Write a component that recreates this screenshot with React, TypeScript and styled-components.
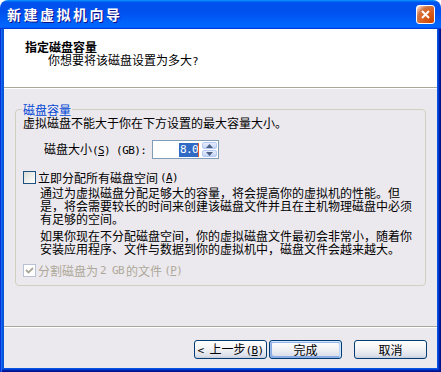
import * as React from "react";
import styled, { createGlobalStyle } from "styled-components";

const uiFont = `"Noto Sans CJK SC", "Noto Sans", "Liberation Sans", sans-serif`;
const monoFont = `"DejaVu Sans Mono", "Liberation Mono", monospace`;
const faceColor = "#ece9ee";

const GlobalStyle = createGlobalStyle`
  html, body {
    margin: 0;
    padding: 0;
    background: #fff;
  }
  body {
    font-family: ${uiFont};
    font-size: 12px;
    line-height: 13px;
    color: #000;
  }
`;

const Window = styled.div`
  width: 441px;
  height: 372px;
  display: flex;
  flex-direction: column;
  border-radius: 8px 8px 0 0;
  overflow: hidden;
`;

const TitleBar = styled.div`
  height: 29px;
  flex: none;
  display: flex;
  align-items: center;
  justify-content: space-between;
  padding: 0 7px 0 7px;
  box-sizing: border-box;
  background: linear-gradient(180deg, #0997ff, #0053ee 8%, #0050ee 40%, #06f 88%, #06f 93%, #005bff 95%, #003dd7 96%, #003dd7);
`;

const TitleText = styled.span`
  color: #fff;
  font-weight: bold;
  font-size: 14px;
  letter-spacing: 2.5px;
  text-shadow: 1px 1px #0f1089;
`;

const CloseButton = styled.div`
  width: 19px;
  height: 19px;
  box-sizing: border-box;
  margin-right: -1px;
  border: 1px solid #fff;
  border-radius: 3px;
  display: flex;
  align-items: center;
  justify-content: center;
  background: radial-gradient(circle at 90% 90%, #cc4600 0%, #dc6527 55%, #cd7546 70%, #ffccb2 90%, #fff 100%);
`;

const Frame = styled.div`
  flex: 1;
  display: flex;
  padding: 0 4px 4px 4px;
  background: #0855dd;
  box-shadow: inset 1px 0 #0831d9, inset 2px 0 #166aee, inset -1px -1px #00138c, inset -2px -2px #001ea0, inset -3px -3px #003bda;
`;

const Client = styled.div`
  flex: 1;
  display: flex;
  flex-direction: column;
  background: ${faceColor};
`;

const Header = styled.div`
  height: 58px;
  flex: none;
  box-sizing: border-box;
  background: #fff;
  padding: 11px 0 0 21px;
`;

const HeaderTitle = styled.div`
  font-weight: bold;
`;

const HeaderSub = styled.div`
  margin-left: 23px;
`;

const Separator = styled.div`
  flex: none;
  height: 0;
  border-top: 1px solid #aca899;
  border-bottom: 1px solid #fff;
`;

const Body = styled.div`
  flex: 1;
  padding: 14px 11px 0 11px;
`;

const Group = styled.fieldset`
  margin: 0;
  padding: 0 6px 8px 7px;
  border: 1px solid #d0d0bf;
  border-radius: 4px;
`;

const Legend = styled.legend`
  color: #0046d5;
  padding: 0 1px;
  margin-left: -1px;
`;

const Latin = styled.span`
  font-family: ${monoFont};
  font-size: 11px;
  letter-spacing: -0.6px;
`;

const Line = styled.div`
  white-space: nowrap;
`;

const SizeRow = styled.div`
  display: flex;
  align-items: center;
  margin: 11px 0 0 21px;
`;

const SizeLabel = styled.span`
  width: 108px;
`;

const SpinBox = styled.div`
  width: 67px;
  height: 19px;
  box-sizing: border-box;
  border: 1px solid #7f9db9;
  background: #fff;
  display: flex;
  align-items: center;
  padding: 1px 1px 1px 0;
`;

const SpinValue = styled.div`
  flex: 1;
  display: flex;
  justify-content: flex-end;
  align-items: center;
  padding-right: 3px;
`;

const Selected = styled.span`
  background: #316ac5;
  color: #fff;
  font-family: ${monoFont};
  font-size: 11px;
  letter-spacing: -0.6px;
  line-height: 14px;
  padding: 0 0 0 1px;
`;

const Caret = styled.span`
  width: 1px;
  height: 14px;
  background: #e0552a;
`;

const SpinButtons = styled.div`
  width: 15px;
  height: 100%;
  display: flex;
  flex-direction: column;
  gap: 1px;
`;

const SpinButton = styled.div`
  flex: 1;
  border: 1px solid #b4c8f6;
  border-radius: 2px;
  background: linear-gradient(180deg, #e6eefc, #c6d3f7);
  display: flex;
  align-items: center;
  justify-content: center;
`;

const CheckRow = styled.label<{ $disabled?: boolean }>`
  display: flex;
  align-items: center;
  gap: 2px;
  color: ${(p) => (p.$disabled ? "#aca899" : "#000")};
  margin-top: ${(p) => (p.$disabled ? "9px" : "12px")};
`;

const Box = styled.span<{ $disabled?: boolean }>`
  width: 13px;
  height: 13px;
  flex: none;
  box-sizing: border-box;
  border: 1px solid ${(p) => (p.$disabled ? "#b8c2d4" : "#1c5180")};
  background: ${(p) => (p.$disabled ? "#fff" : "linear-gradient(135deg, #dcdcd7, #fff)")};
  display: flex;
  align-items: center;
  justify-content: center;
`;

const Para = styled.div`
  margin: 2px 0 0 17px;
  & + & {
    margin-top: 4px;
  }
`;

const Footer = styled.div`
  flex: none;
  display: flex;
  justify-content: flex-end;
  padding: 12px 10px 9px 0;
`;

const Button = styled.button<{ $primary?: boolean; $gapLeft?: number }>`
  width: 73px;
  height: 19px;
  margin-left: ${(p) => p.$gapLeft ?? 2}px;
  padding: 0;
  font-family: ${uiFont};
  font-size: 12px;
  line-height: 13px;
  color: #000;
  border: 1px solid #003c74;
  border-radius: 3px;
  background: linear-gradient(180deg, #fff 0%, #f3f3f6 45%, #dde1ea 85%, #c5ccda 100%);
  box-shadow: ${(p) =>
    p.$primary
      ? "inset -1px 1px #cee7ff, inset 1px 2px #98b8ea, inset -2px 2px #bcd4f6, inset 1px -1px #89ade4, inset 2px -2px #89ade4"
      : "none"};
`;

const Check = ({ color }: { color: string }) => (
  <svg width="9" height="9" viewBox="0 0 9 9">
    <path d="M1 4 L3.5 6.5 L8 2" stroke={color} strokeWidth="1.8" fill="none" />
  </svg>
);

const Arrow = ({ up }: { up?: boolean }) => (
  <svg width="7" height="4" viewBox="0 0 7 4">
    <polygon points={up ? "0,4 3.5,0 7,4" : "0,0 3.5,4 7,0"} fill="#4d6185" />
  </svg>
);

export default function App() {
  return (
    <>
      <GlobalStyle />
      <Window>
        <TitleBar>
          <TitleText>新建虚拟机向导</TitleText>
          <CloseButton>
            <svg width="11" height="11" viewBox="0 0 11 11">
              <path d="M2 2 L9 9 M9 2 L2 9" stroke="#fff" strokeWidth="2" />
            </svg>
          </CloseButton>
        </TitleBar>
        <Frame>
          <Client>
            <Header>
              <HeaderTitle>指定磁盘容量</HeaderTitle>
              <HeaderSub>
                你想要将该磁盘设置为多大<Latin>?</Latin>
              </HeaderSub>
            </Header>
            <Separator />
            <Body>
              <Group>
                <Legend>磁盘容量</Legend>
                <Line>虚拟磁盘不能大于你在下方设置的最大容量大小。</Line>
                <SizeRow>
                  <SizeLabel>
                    磁盘大小
                    <Latin>
                      (<u>S</u>) (GB):
                    </Latin>
                  </SizeLabel>
                  <SpinBox>
                    <SpinValue>
                      <Selected>8.0</Selected>
                      <Caret />
                    </SpinValue>
                    <SpinButtons>
                      <SpinButton>
                        <Arrow up />
                      </SpinButton>
                      <SpinButton>
                        <Arrow />
                      </SpinButton>
                    </SpinButtons>
                  </SpinBox>
                </SizeRow>
                <CheckRow>
                  <Box />
                  立即分配所有磁盘空间
                  <Latin>
                    (<u>A</u>)
                  </Latin>
                </CheckRow>
                <Para>
                  <Line>通过为虚拟磁盘分配足够大的容量，将会提高你的虚拟机的性能。但</Line>
                  <Line>是，将会需要较长的时间来创建该磁盘文件并且在主机物理磁盘中必须</Line>
                  <Line>有足够的空间。</Line>
                </Para>
                <Para>
                  <Line>如果你现在不分配磁盘空间，你的虚拟磁盘文件最初会非常小，随着你</Line>
                  <Line>安装应用程序、文件与数据到你的虚拟机中，磁盘文件会越来越大。</Line>
                </Para>
                <CheckRow $disabled>
                  <Box $disabled>
                    <Check color="#aca899" />
                  </Box>
                  分割磁盘为<Latin> 2 GB </Latin>的文件
                  <Latin>
                    (<u>P</u>)
                  </Latin>
                </CheckRow>
              </Group>
            </Body>
            <Separator />
            <Footer>
              <Button>
                <Latin>&lt; </Latin>上一步
                <Latin>
                  (<u>B</u>)
                </Latin>
              </Button>
              <Button $primary>完成</Button>
              <Button $gapLeft={12}>取消</Button>
            </Footer>
          </Client>
        </Frame>
      </Window>
    </>
  );
}
